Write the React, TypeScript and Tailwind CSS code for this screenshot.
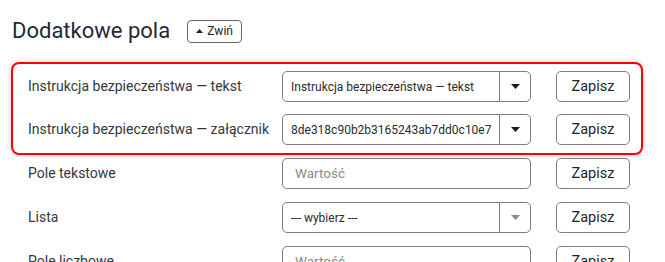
import React from "react";

function Caret({ light }: { light?: boolean }) {
  return (
    <svg width="9" height="5" viewBox="0 0 9 5" className="block">
      <path d="M0 0 L9 0 L4.5 5 Z" fill={light ? "#8a8a8a" : "#1a1a1a"} />
    </svg>
  );
}

function SelectBox({ value, light }: { value: string; light?: boolean }) {
  return (
    <div className="flex h-[31px] w-[249px] items-stretch rounded-[5px] border border-[#7d7d7d] bg-white">
      <div className="flex flex-1 items-center overflow-hidden whitespace-nowrap pl-[8px] text-[12px] text-[#2b2b2b]">
        {value}
      </div>
      <div className="flex w-[31px] items-center justify-center border-l border-[#7d7d7d]">
        <Caret light={light} />
      </div>
    </div>
  );
}

function InputBox({ placeholder }: { placeholder: string }) {
  return (
    <div className="flex h-[31px] w-[249px] items-center rounded-[5px] border border-[#7d7d7d] bg-white pl-[12px] text-[13.5px] text-[#8a8a8a]">
      {placeholder}
    </div>
  );
}

function SaveButton() {
  return (
    <div className="ml-[25px] flex h-[31px] w-[74px] items-center justify-center rounded-[5px] border border-[#7d7d7d] bg-white text-[14.5px] text-[#1f1f1f]">
      Zapisz
    </div>
  );
}

function Row({ label, children }: { label: string; children: React.ReactNode }) {
  return (
    <div className="flex items-center">
      <div className="w-[254px] whitespace-nowrap text-[14px] text-[#33383d]">{label}</div>
      {children}
      <SaveButton />
    </div>
  );
}

export default function App() {
  return (
    <div
      className="h-[262px] w-[665px] overflow-hidden bg-white"
      style={{ fontFamily: "Roboto, 'Liberation Sans', sans-serif" }}
    >
      <div className="flex items-center pl-[12px] pt-[16px]">
        <h2 className="text-[22px] leading-[30px] text-[#1f2a36]">Dodatkowe pola</h2>
        <div className="ml-[17px] flex h-[23px] w-[55px] items-center justify-center gap-[4px] rounded-[4px] border border-[#666] text-[12px] text-[#222]">
          <svg width="7" height="4" viewBox="0 0 7 4">
            <path d="M0 4 L7 4 L3.5 0 Z" fill="#222" />
          </svg>
          <span>Zwiń</span>
        </div>
      </div>

      <div className="ml-[11px] mt-[16px] flex w-[632px] flex-col gap-[12px] rounded-[8px] border-2 border-[#ff0000] pb-[8px] pl-[15px] pt-[7px] shadow-[0_0_6px_rgba(0,0,0,0.18)]">
        <Row label="Instrukcja bezpieczeństwa — tekst">
          <SelectBox value="Instrukcja bezpieczeństwa — tekst" />
        </Row>
        <Row label="Instrukcja bezpieczeństwa — załącznik">
          <SelectBox value="8de318c90b2b3165243ab7dd0c10e7" />
        </Row>
      </div>

      <div className="ml-[28px] mt-[3px] flex flex-col gap-[13px]">
        <Row label="Pole tekstowe">
          <InputBox placeholder="Wartość" />
        </Row>
        <Row label="Lista">
          <SelectBox value="--- wybierz ---" light />
        </Row>
        <Row label="Pole liczbowe">
          <InputBox placeholder="Wartość" />
        </Row>
      </div>
    </div>
  );
}
